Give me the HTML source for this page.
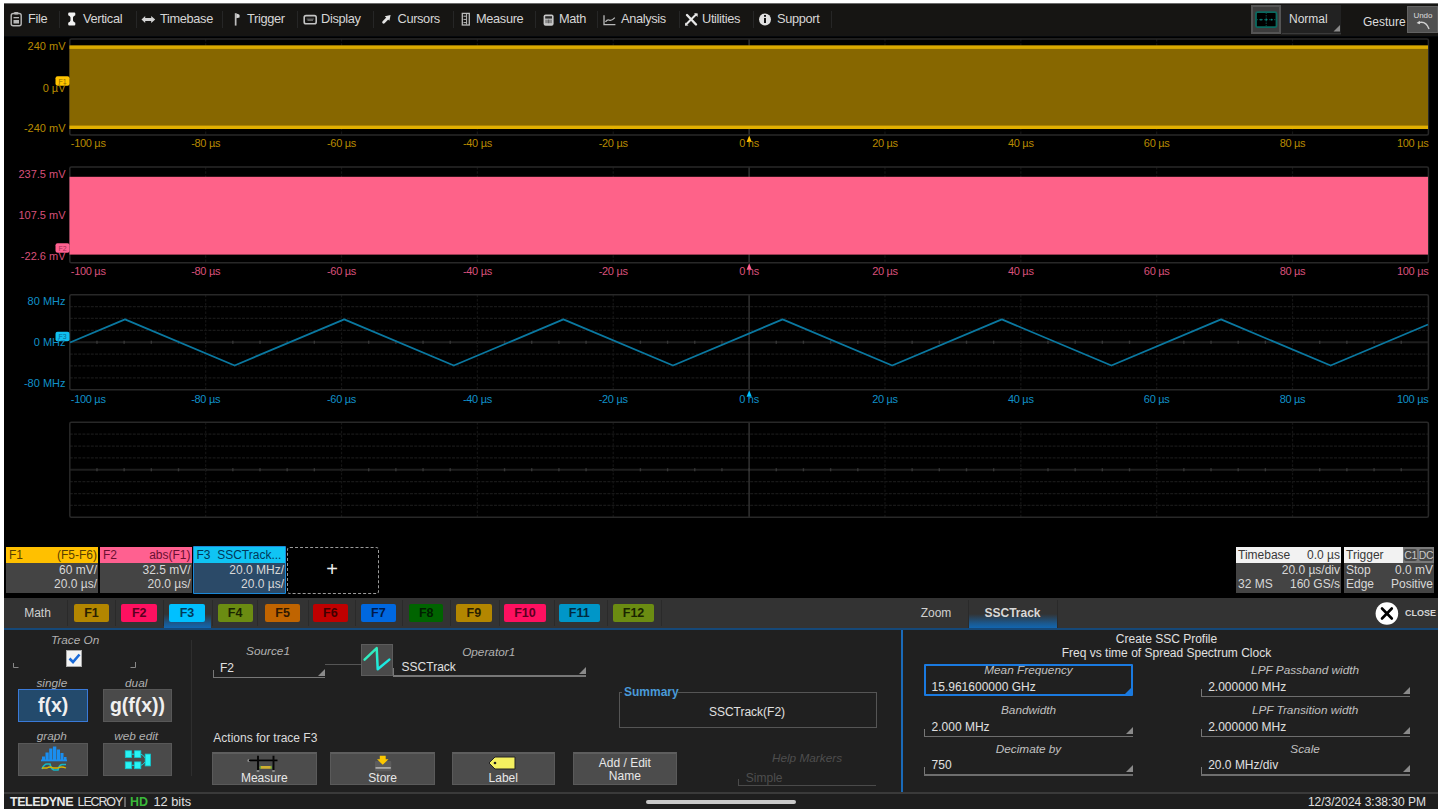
<!DOCTYPE html>
<html><head><meta charset="utf-8">
<style>
html,body{margin:0;padding:0;}
body{width:1441px;height:812px;background:#fff;position:relative;overflow:hidden;font-family:"Liberation Sans", sans-serif;}
.a{position:absolute;white-space:pre;}
.t{position:absolute;white-space:pre;line-height:1;}
</style></head><body>
<div class="a" style="left:4px;top:3px;width:1434px;height:806px;background:#000;"></div>

<div class="a" style="left:4px;top:3px;width:1434px;height:33px;background:#161513;"></div>
<div class="a" style="left:4px;top:36px;width:1434px;height:1px;background:#05080c;"></div>
<div class="a" style="left:4px;top:3px;width:1434px;height:1px;background:#6a6a6a;"></div>
<div class="t" style="left:28px;top:12.7px;font-size:12.8px;letter-spacing:-0.35px;color:#d6d6d6;">File</div>
<div class="a" style="left:59px;top:11px;width:1px;height:17px;background:#262626;"></div>
<div class="t" style="left:83px;top:12.7px;font-size:12.8px;letter-spacing:-0.35px;color:#d6d6d6;">Vertical</div>
<div class="a" style="left:135.5px;top:11px;width:1px;height:17px;background:#262626;"></div>
<div class="t" style="left:160px;top:12.7px;font-size:12.8px;letter-spacing:-0.35px;color:#d6d6d6;">Timebase</div>
<div class="a" style="left:222px;top:11px;width:1px;height:17px;background:#262626;"></div>
<div class="t" style="left:247px;top:12.7px;font-size:12.8px;letter-spacing:-0.35px;color:#d6d6d6;">Trigger</div>
<div class="a" style="left:296.5px;top:11px;width:1px;height:17px;background:#262626;"></div>
<div class="t" style="left:321px;top:12.7px;font-size:12.8px;letter-spacing:-0.35px;color:#d6d6d6;">Display</div>
<div class="a" style="left:372.5px;top:11px;width:1px;height:17px;background:#262626;"></div>
<div class="t" style="left:397.5px;top:12.7px;font-size:12.8px;letter-spacing:-0.35px;color:#d6d6d6;">Cursors</div>
<div class="a" style="left:452.5px;top:11px;width:1px;height:17px;background:#262626;"></div>
<div class="t" style="left:476px;top:12.7px;font-size:12.8px;letter-spacing:-0.35px;color:#d6d6d6;">Measure</div>
<div class="a" style="left:535px;top:11px;width:1px;height:17px;background:#262626;"></div>
<div class="t" style="left:559px;top:12.7px;font-size:12.8px;letter-spacing:-0.35px;color:#d6d6d6;">Math</div>
<div class="a" style="left:597px;top:11px;width:1px;height:17px;background:#262626;"></div>
<div class="t" style="left:621px;top:12.7px;font-size:12.8px;letter-spacing:-0.35px;color:#d6d6d6;">Analysis</div>
<div class="a" style="left:679px;top:11px;width:1px;height:17px;background:#262626;"></div>
<div class="t" style="left:702px;top:12.7px;font-size:12.8px;letter-spacing:-0.35px;color:#d6d6d6;">Utilities</div>
<div class="a" style="left:753px;top:11px;width:1px;height:17px;background:#262626;"></div>
<div class="t" style="left:777px;top:12.7px;font-size:12.8px;letter-spacing:-0.35px;color:#d6d6d6;">Support</div>
<div class="a" style="left:831px;top:11px;width:1px;height:17px;background:#262626;"></div>
<svg class="a" style="left:0;top:0" width="840" height="36" viewBox="0 0 840 36">
<g fill="none" stroke="#b8b8b8" stroke-width="1.4">
 <rect x="11.2" y="13.5" width="10" height="12.3" rx="2"/>
</g>
<rect x="14" y="12" width="4.5" height="2.5" rx="1" fill="#b8b8b8"/>
<rect x="13.5" y="17" width="5.5" height="1.3" fill="#b8b8b8"/>
<rect x="13.5" y="20" width="5.5" height="3.5" fill="#b8b8b8"/>
<path d="M68.2 13.5 Q68.2 12.6 69.2 12.6 L74.3 12.6 Q75.3 12.6 75.3 13.5 L75.3 15.2 Q73.2 16 73 17.5 L73 20.5 Q73.2 22 75.3 22.8 L75.3 24.5 Q75.3 25.4 74.3 25.4 L69.2 25.4 Q68.2 25.4 68.2 24.5 L68.2 22.8 Q70.3 22 70.5 20.5 L70.5 17.5 Q70.3 16 68.2 15.2 Z" fill="#f2f2f2"/>
<path d="M141.5 19.4 L145.2 16 L145.2 17.9 L151.2 17.9 L151.2 16 L155.2 19.4 L151.2 22.9 L151.2 20.9 L145.2 20.9 L145.2 22.9 Z" fill="#d4d4d4"/>
<rect x="234.8" y="13.2" width="1.7" height="12.4" fill="#bdbdbd"/>
<path d="M236.3 13.4 L238.6 14.3 L239.6 15 L239.6 17.6 L236.3 18.2 Z" fill="#d6d6d6"/>
<rect x="304.2" y="15.6" width="12" height="8.2" rx="1.8" fill="none" stroke="#c4c4c4" stroke-width="1.6"/>
<rect x="306.5" y="17.8" width="7.5" height="2.2" fill="#3a3a3a"/>
<rect x="307.5" y="19.6" width="5.5" height="1" fill="#a0a0a0"/>
<path d="M383.6 22.2 L387.5 18.3" stroke="#e4e4e4" stroke-width="2.8" stroke-linecap="round"/><path d="M390.6 15 L384.8 16.2 L389.4 20.8 Z" fill="#e4e4e4"/>
<rect x="462.3" y="13.4" width="7" height="11.6" fill="none" stroke="#bcbcbc" stroke-width="1.3"/>
<path d="M466.6 14 V24.5" stroke="#bcbcbc" stroke-width="1"/>
<path d="M463.5 16.2 h3 M463.5 19.4 h3 M463.5 22.6 h3" stroke="#bcbcbc" stroke-width="1"/>
<rect x="543.6" y="14.6" width="10" height="11.2" rx="2" fill="#c8c8c8"/>
<rect x="545.2" y="16.2" width="6.8" height="2.4" fill="#2a2a2a"/>
<rect x="545.2" y="19.6" width="6.8" height="3.6" fill="#8a8a8a"/>
<path d="M548.6 19.6 V23.2" stroke="#555" stroke-width="0.8"/>
<path d="M604 15.2 L604 24.6 L615.4 24.6" fill="none" stroke="#b8b8b8" stroke-width="1.3"/>
<path d="M605.5 21.8 Q607.5 19 609.5 20.2 Q611.5 21.2 614.8 17.6" fill="none" stroke="#b8b8b8" stroke-width="1.3"/>
<path d="M687 15 L696 24.5" stroke="#e8e8e8" stroke-width="2.4" stroke-linecap="round"/><path d="M696 14.5 L687 23.5" stroke="#e8e8e8" stroke-width="2" stroke-linecap="round"/><path d="M694 13.2 L697.8 13.6 L697.5 17 Z M685.2 22.5 L688.5 25.5 L685 25.8 Z" fill="#e8e8e8"/>
<circle cx="765" cy="19.5" r="6" fill="#e0e0e0"/>
<rect x="764" y="18" width="2" height="5" fill="#141414"/>
<rect x="764" y="15" width="2" height="1.8" fill="#141414"/>
</svg>
<div class="a" style="left:1250.6px;top:4.7px;width:30.5px;height:29.5px;background:#3c3c3c;border:2px solid #545454;box-sizing:border-box;"></div>
<svg class="a" style="left:1250px;top:8px" width="32" height="24" viewBox="1250 8 32 24">
<rect x="1256" y="12.2" width="20.5" height="15" rx="1.5" fill="#000" stroke="#0a6a60" stroke-width="1.8"/>
<path d="M1266.2 12.5 V27 M1256.5 19.7 H1276.5" stroke="#0a5a52" stroke-width="0.9" stroke-dasharray="1.5 1"/>
<circle cx="1261" cy="19.7" r="0.9" fill="#0a8a80"/><circle cx="1271.5" cy="19.7" r="0.9" fill="#0a8a80"/><circle cx="1266.2" cy="19.7" r="0.9" fill="#0a8a80"/>
</svg>
<div class="a" style="left:1281px;top:4.7px;width:59.8px;height:30.2px;background:#222;"></div>
<div class="a" style="left:1282px;top:33.2px;width:58.8px;height:1.2px;background:#3a3a3a;"></div>
<div class="t" style="left:1289px;top:13px;font-size:12px;color:#dcdcdc;">Normal</div>
<svg class="a" style="left:1333px;top:25px" width="8" height="8"><path d="M7 0 L7 6.5 L0.5 6.5 Z" fill="#8a8a8a"/></svg>
<div class="t" style="left:1363px;top:15.5px;font-size:12px;color:#dcdcdc;">Gesture</div>
<div class="a" style="left:1407px;top:6.2px;width:30.5px;height:27px;background:#505050;border:1px solid #626262;box-sizing:border-box;"></div>
<div class="t" style="left:1413.4px;top:11.9px;font-size:8px;color:#dcdcdc;">Undo</div>
<svg class="a" style="left:1400px;top:10px" width="41" height="25" viewBox="1400 10 41 25"><path d="M1418.5 22.6 Q1426 20.5 1428.8 28.6" fill="none" stroke="#d0d0d0" stroke-width="1.4" stroke-linecap="round"/><path d="M1416.6 23 L1419.8 20.8 L1420 24.2 Z" fill="#d8d8d8"/></svg>
<svg class="a" style="left:0;top:0" width="1441" height="600" viewBox="0 0 1441 600">
<line x1="69.8" y1="51.00" x2="1428.4" y2="51.00" stroke="#181818" stroke-width="1.2" stroke-dasharray="3 1.2"/>
<line x1="69.8" y1="63.00" x2="1428.4" y2="63.00" stroke="#181818" stroke-width="1.2" stroke-dasharray="3 1.2"/>
<line x1="69.8" y1="75.00" x2="1428.4" y2="75.00" stroke="#181818" stroke-width="1.2" stroke-dasharray="3 1.2"/>
<line x1="69.8" y1="87.00" x2="1428.4" y2="87.00" stroke="#1e1e1e" stroke-width="2"/>
<line x1="96.97" y1="85.50" x2="96.97" y2="88.50" stroke="#383838" stroke-width="1.4"/>
<line x1="124.14" y1="85.50" x2="124.14" y2="88.50" stroke="#383838" stroke-width="1.4"/>
<line x1="151.32" y1="85.50" x2="151.32" y2="88.50" stroke="#383838" stroke-width="1.4"/>
<line x1="178.49" y1="85.50" x2="178.49" y2="88.50" stroke="#383838" stroke-width="1.4"/>
<line x1="205.66" y1="85.50" x2="205.66" y2="88.50" stroke="#383838" stroke-width="1.4"/>
<line x1="232.83" y1="85.50" x2="232.83" y2="88.50" stroke="#383838" stroke-width="1.4"/>
<line x1="260.00" y1="85.50" x2="260.00" y2="88.50" stroke="#383838" stroke-width="1.4"/>
<line x1="287.18" y1="85.50" x2="287.18" y2="88.50" stroke="#383838" stroke-width="1.4"/>
<line x1="314.35" y1="85.50" x2="314.35" y2="88.50" stroke="#383838" stroke-width="1.4"/>
<line x1="341.52" y1="85.50" x2="341.52" y2="88.50" stroke="#383838" stroke-width="1.4"/>
<line x1="368.69" y1="85.50" x2="368.69" y2="88.50" stroke="#383838" stroke-width="1.4"/>
<line x1="395.86" y1="85.50" x2="395.86" y2="88.50" stroke="#383838" stroke-width="1.4"/>
<line x1="423.04" y1="85.50" x2="423.04" y2="88.50" stroke="#383838" stroke-width="1.4"/>
<line x1="450.21" y1="85.50" x2="450.21" y2="88.50" stroke="#383838" stroke-width="1.4"/>
<line x1="477.38" y1="85.50" x2="477.38" y2="88.50" stroke="#383838" stroke-width="1.4"/>
<line x1="504.55" y1="85.50" x2="504.55" y2="88.50" stroke="#383838" stroke-width="1.4"/>
<line x1="531.72" y1="85.50" x2="531.72" y2="88.50" stroke="#383838" stroke-width="1.4"/>
<line x1="558.90" y1="85.50" x2="558.90" y2="88.50" stroke="#383838" stroke-width="1.4"/>
<line x1="586.07" y1="85.50" x2="586.07" y2="88.50" stroke="#383838" stroke-width="1.4"/>
<line x1="613.24" y1="85.50" x2="613.24" y2="88.50" stroke="#383838" stroke-width="1.4"/>
<line x1="640.41" y1="85.50" x2="640.41" y2="88.50" stroke="#383838" stroke-width="1.4"/>
<line x1="667.58" y1="85.50" x2="667.58" y2="88.50" stroke="#383838" stroke-width="1.4"/>
<line x1="694.76" y1="85.50" x2="694.76" y2="88.50" stroke="#383838" stroke-width="1.4"/>
<line x1="721.93" y1="85.50" x2="721.93" y2="88.50" stroke="#383838" stroke-width="1.4"/>
<line x1="749.10" y1="85.50" x2="749.10" y2="88.50" stroke="#383838" stroke-width="1.4"/>
<line x1="776.27" y1="85.50" x2="776.27" y2="88.50" stroke="#383838" stroke-width="1.4"/>
<line x1="803.44" y1="85.50" x2="803.44" y2="88.50" stroke="#383838" stroke-width="1.4"/>
<line x1="830.62" y1="85.50" x2="830.62" y2="88.50" stroke="#383838" stroke-width="1.4"/>
<line x1="857.79" y1="85.50" x2="857.79" y2="88.50" stroke="#383838" stroke-width="1.4"/>
<line x1="884.96" y1="85.50" x2="884.96" y2="88.50" stroke="#383838" stroke-width="1.4"/>
<line x1="912.13" y1="85.50" x2="912.13" y2="88.50" stroke="#383838" stroke-width="1.4"/>
<line x1="939.30" y1="85.50" x2="939.30" y2="88.50" stroke="#383838" stroke-width="1.4"/>
<line x1="966.48" y1="85.50" x2="966.48" y2="88.50" stroke="#383838" stroke-width="1.4"/>
<line x1="993.65" y1="85.50" x2="993.65" y2="88.50" stroke="#383838" stroke-width="1.4"/>
<line x1="1020.82" y1="85.50" x2="1020.82" y2="88.50" stroke="#383838" stroke-width="1.4"/>
<line x1="1047.99" y1="85.50" x2="1047.99" y2="88.50" stroke="#383838" stroke-width="1.4"/>
<line x1="1075.16" y1="85.50" x2="1075.16" y2="88.50" stroke="#383838" stroke-width="1.4"/>
<line x1="1102.34" y1="85.50" x2="1102.34" y2="88.50" stroke="#383838" stroke-width="1.4"/>
<line x1="1129.51" y1="85.50" x2="1129.51" y2="88.50" stroke="#383838" stroke-width="1.4"/>
<line x1="1156.68" y1="85.50" x2="1156.68" y2="88.50" stroke="#383838" stroke-width="1.4"/>
<line x1="1183.85" y1="85.50" x2="1183.85" y2="88.50" stroke="#383838" stroke-width="1.4"/>
<line x1="1211.02" y1="85.50" x2="1211.02" y2="88.50" stroke="#383838" stroke-width="1.4"/>
<line x1="1238.20" y1="85.50" x2="1238.20" y2="88.50" stroke="#383838" stroke-width="1.4"/>
<line x1="1265.37" y1="85.50" x2="1265.37" y2="88.50" stroke="#383838" stroke-width="1.4"/>
<line x1="1292.54" y1="85.50" x2="1292.54" y2="88.50" stroke="#383838" stroke-width="1.4"/>
<line x1="1319.71" y1="85.50" x2="1319.71" y2="88.50" stroke="#383838" stroke-width="1.4"/>
<line x1="1346.88" y1="85.50" x2="1346.88" y2="88.50" stroke="#383838" stroke-width="1.4"/>
<line x1="1374.06" y1="85.50" x2="1374.06" y2="88.50" stroke="#383838" stroke-width="1.4"/>
<line x1="1401.23" y1="85.50" x2="1401.23" y2="88.50" stroke="#383838" stroke-width="1.4"/>
<line x1="69.8" y1="99.00" x2="1428.4" y2="99.00" stroke="#181818" stroke-width="1.2" stroke-dasharray="3 1.2"/>
<line x1="69.8" y1="111.00" x2="1428.4" y2="111.00" stroke="#181818" stroke-width="1.2" stroke-dasharray="3 1.2"/>
<line x1="69.8" y1="123.00" x2="1428.4" y2="123.00" stroke="#181818" stroke-width="1.2" stroke-dasharray="3 1.2"/>
<line x1="205.66" y1="39.0" x2="205.66" y2="135.0" stroke="#141414" stroke-width="1.2" stroke-dasharray="2.5 1.7"/>
<line x1="341.52" y1="39.0" x2="341.52" y2="135.0" stroke="#141414" stroke-width="1.2" stroke-dasharray="2.5 1.7"/>
<line x1="477.38" y1="39.0" x2="477.38" y2="135.0" stroke="#141414" stroke-width="1.2" stroke-dasharray="2.5 1.7"/>
<line x1="613.24" y1="39.0" x2="613.24" y2="135.0" stroke="#141414" stroke-width="1.2" stroke-dasharray="2.5 1.7"/>
<line x1="749.10" y1="39.0" x2="749.10" y2="135.0" stroke="#3a3a3a" stroke-width="1.3"/>
<line x1="884.96" y1="39.0" x2="884.96" y2="135.0" stroke="#141414" stroke-width="1.2" stroke-dasharray="2.5 1.7"/>
<line x1="1020.82" y1="39.0" x2="1020.82" y2="135.0" stroke="#141414" stroke-width="1.2" stroke-dasharray="2.5 1.7"/>
<line x1="1156.68" y1="39.0" x2="1156.68" y2="135.0" stroke="#141414" stroke-width="1.2" stroke-dasharray="2.5 1.7"/>
<line x1="1292.54" y1="39.0" x2="1292.54" y2="135.0" stroke="#141414" stroke-width="1.2" stroke-dasharray="2.5 1.7"/>
<rect x="69.8" y="39.0" width="1358.6000000000001" height="96.0" rx="1.5" fill="none" stroke="#282828" stroke-width="1.5"/>
<line x1="69.8" y1="178.97" x2="1428.4" y2="178.97" stroke="#181818" stroke-width="1.2" stroke-dasharray="3 1.2"/>
<line x1="69.8" y1="190.95" x2="1428.4" y2="190.95" stroke="#181818" stroke-width="1.2" stroke-dasharray="3 1.2"/>
<line x1="69.8" y1="202.93" x2="1428.4" y2="202.93" stroke="#181818" stroke-width="1.2" stroke-dasharray="3 1.2"/>
<line x1="69.8" y1="214.90" x2="1428.4" y2="214.90" stroke="#1e1e1e" stroke-width="2"/>
<line x1="96.97" y1="213.40" x2="96.97" y2="216.40" stroke="#383838" stroke-width="1.4"/>
<line x1="124.14" y1="213.40" x2="124.14" y2="216.40" stroke="#383838" stroke-width="1.4"/>
<line x1="151.32" y1="213.40" x2="151.32" y2="216.40" stroke="#383838" stroke-width="1.4"/>
<line x1="178.49" y1="213.40" x2="178.49" y2="216.40" stroke="#383838" stroke-width="1.4"/>
<line x1="205.66" y1="213.40" x2="205.66" y2="216.40" stroke="#383838" stroke-width="1.4"/>
<line x1="232.83" y1="213.40" x2="232.83" y2="216.40" stroke="#383838" stroke-width="1.4"/>
<line x1="260.00" y1="213.40" x2="260.00" y2="216.40" stroke="#383838" stroke-width="1.4"/>
<line x1="287.18" y1="213.40" x2="287.18" y2="216.40" stroke="#383838" stroke-width="1.4"/>
<line x1="314.35" y1="213.40" x2="314.35" y2="216.40" stroke="#383838" stroke-width="1.4"/>
<line x1="341.52" y1="213.40" x2="341.52" y2="216.40" stroke="#383838" stroke-width="1.4"/>
<line x1="368.69" y1="213.40" x2="368.69" y2="216.40" stroke="#383838" stroke-width="1.4"/>
<line x1="395.86" y1="213.40" x2="395.86" y2="216.40" stroke="#383838" stroke-width="1.4"/>
<line x1="423.04" y1="213.40" x2="423.04" y2="216.40" stroke="#383838" stroke-width="1.4"/>
<line x1="450.21" y1="213.40" x2="450.21" y2="216.40" stroke="#383838" stroke-width="1.4"/>
<line x1="477.38" y1="213.40" x2="477.38" y2="216.40" stroke="#383838" stroke-width="1.4"/>
<line x1="504.55" y1="213.40" x2="504.55" y2="216.40" stroke="#383838" stroke-width="1.4"/>
<line x1="531.72" y1="213.40" x2="531.72" y2="216.40" stroke="#383838" stroke-width="1.4"/>
<line x1="558.90" y1="213.40" x2="558.90" y2="216.40" stroke="#383838" stroke-width="1.4"/>
<line x1="586.07" y1="213.40" x2="586.07" y2="216.40" stroke="#383838" stroke-width="1.4"/>
<line x1="613.24" y1="213.40" x2="613.24" y2="216.40" stroke="#383838" stroke-width="1.4"/>
<line x1="640.41" y1="213.40" x2="640.41" y2="216.40" stroke="#383838" stroke-width="1.4"/>
<line x1="667.58" y1="213.40" x2="667.58" y2="216.40" stroke="#383838" stroke-width="1.4"/>
<line x1="694.76" y1="213.40" x2="694.76" y2="216.40" stroke="#383838" stroke-width="1.4"/>
<line x1="721.93" y1="213.40" x2="721.93" y2="216.40" stroke="#383838" stroke-width="1.4"/>
<line x1="749.10" y1="213.40" x2="749.10" y2="216.40" stroke="#383838" stroke-width="1.4"/>
<line x1="776.27" y1="213.40" x2="776.27" y2="216.40" stroke="#383838" stroke-width="1.4"/>
<line x1="803.44" y1="213.40" x2="803.44" y2="216.40" stroke="#383838" stroke-width="1.4"/>
<line x1="830.62" y1="213.40" x2="830.62" y2="216.40" stroke="#383838" stroke-width="1.4"/>
<line x1="857.79" y1="213.40" x2="857.79" y2="216.40" stroke="#383838" stroke-width="1.4"/>
<line x1="884.96" y1="213.40" x2="884.96" y2="216.40" stroke="#383838" stroke-width="1.4"/>
<line x1="912.13" y1="213.40" x2="912.13" y2="216.40" stroke="#383838" stroke-width="1.4"/>
<line x1="939.30" y1="213.40" x2="939.30" y2="216.40" stroke="#383838" stroke-width="1.4"/>
<line x1="966.48" y1="213.40" x2="966.48" y2="216.40" stroke="#383838" stroke-width="1.4"/>
<line x1="993.65" y1="213.40" x2="993.65" y2="216.40" stroke="#383838" stroke-width="1.4"/>
<line x1="1020.82" y1="213.40" x2="1020.82" y2="216.40" stroke="#383838" stroke-width="1.4"/>
<line x1="1047.99" y1="213.40" x2="1047.99" y2="216.40" stroke="#383838" stroke-width="1.4"/>
<line x1="1075.16" y1="213.40" x2="1075.16" y2="216.40" stroke="#383838" stroke-width="1.4"/>
<line x1="1102.34" y1="213.40" x2="1102.34" y2="216.40" stroke="#383838" stroke-width="1.4"/>
<line x1="1129.51" y1="213.40" x2="1129.51" y2="216.40" stroke="#383838" stroke-width="1.4"/>
<line x1="1156.68" y1="213.40" x2="1156.68" y2="216.40" stroke="#383838" stroke-width="1.4"/>
<line x1="1183.85" y1="213.40" x2="1183.85" y2="216.40" stroke="#383838" stroke-width="1.4"/>
<line x1="1211.02" y1="213.40" x2="1211.02" y2="216.40" stroke="#383838" stroke-width="1.4"/>
<line x1="1238.20" y1="213.40" x2="1238.20" y2="216.40" stroke="#383838" stroke-width="1.4"/>
<line x1="1265.37" y1="213.40" x2="1265.37" y2="216.40" stroke="#383838" stroke-width="1.4"/>
<line x1="1292.54" y1="213.40" x2="1292.54" y2="216.40" stroke="#383838" stroke-width="1.4"/>
<line x1="1319.71" y1="213.40" x2="1319.71" y2="216.40" stroke="#383838" stroke-width="1.4"/>
<line x1="1346.88" y1="213.40" x2="1346.88" y2="216.40" stroke="#383838" stroke-width="1.4"/>
<line x1="1374.06" y1="213.40" x2="1374.06" y2="216.40" stroke="#383838" stroke-width="1.4"/>
<line x1="1401.23" y1="213.40" x2="1401.23" y2="216.40" stroke="#383838" stroke-width="1.4"/>
<line x1="69.8" y1="226.88" x2="1428.4" y2="226.88" stroke="#181818" stroke-width="1.2" stroke-dasharray="3 1.2"/>
<line x1="69.8" y1="238.85" x2="1428.4" y2="238.85" stroke="#181818" stroke-width="1.2" stroke-dasharray="3 1.2"/>
<line x1="69.8" y1="250.82" x2="1428.4" y2="250.82" stroke="#181818" stroke-width="1.2" stroke-dasharray="3 1.2"/>
<line x1="205.66" y1="167.0" x2="205.66" y2="262.8" stroke="#141414" stroke-width="1.2" stroke-dasharray="2.5 1.7"/>
<line x1="341.52" y1="167.0" x2="341.52" y2="262.8" stroke="#141414" stroke-width="1.2" stroke-dasharray="2.5 1.7"/>
<line x1="477.38" y1="167.0" x2="477.38" y2="262.8" stroke="#141414" stroke-width="1.2" stroke-dasharray="2.5 1.7"/>
<line x1="613.24" y1="167.0" x2="613.24" y2="262.8" stroke="#141414" stroke-width="1.2" stroke-dasharray="2.5 1.7"/>
<line x1="749.10" y1="167.0" x2="749.10" y2="262.8" stroke="#3a3a3a" stroke-width="1.3"/>
<line x1="884.96" y1="167.0" x2="884.96" y2="262.8" stroke="#141414" stroke-width="1.2" stroke-dasharray="2.5 1.7"/>
<line x1="1020.82" y1="167.0" x2="1020.82" y2="262.8" stroke="#141414" stroke-width="1.2" stroke-dasharray="2.5 1.7"/>
<line x1="1156.68" y1="167.0" x2="1156.68" y2="262.8" stroke="#141414" stroke-width="1.2" stroke-dasharray="2.5 1.7"/>
<line x1="1292.54" y1="167.0" x2="1292.54" y2="262.8" stroke="#141414" stroke-width="1.2" stroke-dasharray="2.5 1.7"/>
<rect x="69.8" y="167.0" width="1358.6000000000001" height="95.8" rx="1.5" fill="none" stroke="#282828" stroke-width="1.5"/>
<line x1="69.8" y1="306.57" x2="1428.4" y2="306.57" stroke="#181818" stroke-width="1.2" stroke-dasharray="3 1.2"/>
<line x1="69.8" y1="318.45" x2="1428.4" y2="318.45" stroke="#181818" stroke-width="1.2" stroke-dasharray="3 1.2"/>
<line x1="69.8" y1="330.32" x2="1428.4" y2="330.32" stroke="#181818" stroke-width="1.2" stroke-dasharray="3 1.2"/>
<line x1="69.8" y1="342.20" x2="1428.4" y2="342.20" stroke="#1e1e1e" stroke-width="2"/>
<line x1="96.97" y1="340.70" x2="96.97" y2="343.70" stroke="#383838" stroke-width="1.4"/>
<line x1="124.14" y1="340.70" x2="124.14" y2="343.70" stroke="#383838" stroke-width="1.4"/>
<line x1="151.32" y1="340.70" x2="151.32" y2="343.70" stroke="#383838" stroke-width="1.4"/>
<line x1="178.49" y1="340.70" x2="178.49" y2="343.70" stroke="#383838" stroke-width="1.4"/>
<line x1="205.66" y1="340.70" x2="205.66" y2="343.70" stroke="#383838" stroke-width="1.4"/>
<line x1="232.83" y1="340.70" x2="232.83" y2="343.70" stroke="#383838" stroke-width="1.4"/>
<line x1="260.00" y1="340.70" x2="260.00" y2="343.70" stroke="#383838" stroke-width="1.4"/>
<line x1="287.18" y1="340.70" x2="287.18" y2="343.70" stroke="#383838" stroke-width="1.4"/>
<line x1="314.35" y1="340.70" x2="314.35" y2="343.70" stroke="#383838" stroke-width="1.4"/>
<line x1="341.52" y1="340.70" x2="341.52" y2="343.70" stroke="#383838" stroke-width="1.4"/>
<line x1="368.69" y1="340.70" x2="368.69" y2="343.70" stroke="#383838" stroke-width="1.4"/>
<line x1="395.86" y1="340.70" x2="395.86" y2="343.70" stroke="#383838" stroke-width="1.4"/>
<line x1="423.04" y1="340.70" x2="423.04" y2="343.70" stroke="#383838" stroke-width="1.4"/>
<line x1="450.21" y1="340.70" x2="450.21" y2="343.70" stroke="#383838" stroke-width="1.4"/>
<line x1="477.38" y1="340.70" x2="477.38" y2="343.70" stroke="#383838" stroke-width="1.4"/>
<line x1="504.55" y1="340.70" x2="504.55" y2="343.70" stroke="#383838" stroke-width="1.4"/>
<line x1="531.72" y1="340.70" x2="531.72" y2="343.70" stroke="#383838" stroke-width="1.4"/>
<line x1="558.90" y1="340.70" x2="558.90" y2="343.70" stroke="#383838" stroke-width="1.4"/>
<line x1="586.07" y1="340.70" x2="586.07" y2="343.70" stroke="#383838" stroke-width="1.4"/>
<line x1="613.24" y1="340.70" x2="613.24" y2="343.70" stroke="#383838" stroke-width="1.4"/>
<line x1="640.41" y1="340.70" x2="640.41" y2="343.70" stroke="#383838" stroke-width="1.4"/>
<line x1="667.58" y1="340.70" x2="667.58" y2="343.70" stroke="#383838" stroke-width="1.4"/>
<line x1="694.76" y1="340.70" x2="694.76" y2="343.70" stroke="#383838" stroke-width="1.4"/>
<line x1="721.93" y1="340.70" x2="721.93" y2="343.70" stroke="#383838" stroke-width="1.4"/>
<line x1="749.10" y1="340.70" x2="749.10" y2="343.70" stroke="#383838" stroke-width="1.4"/>
<line x1="776.27" y1="340.70" x2="776.27" y2="343.70" stroke="#383838" stroke-width="1.4"/>
<line x1="803.44" y1="340.70" x2="803.44" y2="343.70" stroke="#383838" stroke-width="1.4"/>
<line x1="830.62" y1="340.70" x2="830.62" y2="343.70" stroke="#383838" stroke-width="1.4"/>
<line x1="857.79" y1="340.70" x2="857.79" y2="343.70" stroke="#383838" stroke-width="1.4"/>
<line x1="884.96" y1="340.70" x2="884.96" y2="343.70" stroke="#383838" stroke-width="1.4"/>
<line x1="912.13" y1="340.70" x2="912.13" y2="343.70" stroke="#383838" stroke-width="1.4"/>
<line x1="939.30" y1="340.70" x2="939.30" y2="343.70" stroke="#383838" stroke-width="1.4"/>
<line x1="966.48" y1="340.70" x2="966.48" y2="343.70" stroke="#383838" stroke-width="1.4"/>
<line x1="993.65" y1="340.70" x2="993.65" y2="343.70" stroke="#383838" stroke-width="1.4"/>
<line x1="1020.82" y1="340.70" x2="1020.82" y2="343.70" stroke="#383838" stroke-width="1.4"/>
<line x1="1047.99" y1="340.70" x2="1047.99" y2="343.70" stroke="#383838" stroke-width="1.4"/>
<line x1="1075.16" y1="340.70" x2="1075.16" y2="343.70" stroke="#383838" stroke-width="1.4"/>
<line x1="1102.34" y1="340.70" x2="1102.34" y2="343.70" stroke="#383838" stroke-width="1.4"/>
<line x1="1129.51" y1="340.70" x2="1129.51" y2="343.70" stroke="#383838" stroke-width="1.4"/>
<line x1="1156.68" y1="340.70" x2="1156.68" y2="343.70" stroke="#383838" stroke-width="1.4"/>
<line x1="1183.85" y1="340.70" x2="1183.85" y2="343.70" stroke="#383838" stroke-width="1.4"/>
<line x1="1211.02" y1="340.70" x2="1211.02" y2="343.70" stroke="#383838" stroke-width="1.4"/>
<line x1="1238.20" y1="340.70" x2="1238.20" y2="343.70" stroke="#383838" stroke-width="1.4"/>
<line x1="1265.37" y1="340.70" x2="1265.37" y2="343.70" stroke="#383838" stroke-width="1.4"/>
<line x1="1292.54" y1="340.70" x2="1292.54" y2="343.70" stroke="#383838" stroke-width="1.4"/>
<line x1="1319.71" y1="340.70" x2="1319.71" y2="343.70" stroke="#383838" stroke-width="1.4"/>
<line x1="1346.88" y1="340.70" x2="1346.88" y2="343.70" stroke="#383838" stroke-width="1.4"/>
<line x1="1374.06" y1="340.70" x2="1374.06" y2="343.70" stroke="#383838" stroke-width="1.4"/>
<line x1="1401.23" y1="340.70" x2="1401.23" y2="343.70" stroke="#383838" stroke-width="1.4"/>
<line x1="69.8" y1="354.07" x2="1428.4" y2="354.07" stroke="#181818" stroke-width="1.2" stroke-dasharray="3 1.2"/>
<line x1="69.8" y1="365.95" x2="1428.4" y2="365.95" stroke="#181818" stroke-width="1.2" stroke-dasharray="3 1.2"/>
<line x1="69.8" y1="377.82" x2="1428.4" y2="377.82" stroke="#181818" stroke-width="1.2" stroke-dasharray="3 1.2"/>
<line x1="205.66" y1="294.7" x2="205.66" y2="389.7" stroke="#141414" stroke-width="1.2" stroke-dasharray="2.5 1.7"/>
<line x1="341.52" y1="294.7" x2="341.52" y2="389.7" stroke="#141414" stroke-width="1.2" stroke-dasharray="2.5 1.7"/>
<line x1="477.38" y1="294.7" x2="477.38" y2="389.7" stroke="#141414" stroke-width="1.2" stroke-dasharray="2.5 1.7"/>
<line x1="613.24" y1="294.7" x2="613.24" y2="389.7" stroke="#141414" stroke-width="1.2" stroke-dasharray="2.5 1.7"/>
<line x1="749.10" y1="294.7" x2="749.10" y2="389.7" stroke="#3a3a3a" stroke-width="1.3"/>
<line x1="884.96" y1="294.7" x2="884.96" y2="389.7" stroke="#141414" stroke-width="1.2" stroke-dasharray="2.5 1.7"/>
<line x1="1020.82" y1="294.7" x2="1020.82" y2="389.7" stroke="#141414" stroke-width="1.2" stroke-dasharray="2.5 1.7"/>
<line x1="1156.68" y1="294.7" x2="1156.68" y2="389.7" stroke="#141414" stroke-width="1.2" stroke-dasharray="2.5 1.7"/>
<line x1="1292.54" y1="294.7" x2="1292.54" y2="389.7" stroke="#141414" stroke-width="1.2" stroke-dasharray="2.5 1.7"/>
<rect x="69.8" y="294.7" width="1358.6000000000001" height="95.0" rx="1.5" fill="none" stroke="#282828" stroke-width="1.5"/>
<line x1="69.8" y1="434.18" x2="1428.4" y2="434.18" stroke="#181818" stroke-width="1.2" stroke-dasharray="3 1.2"/>
<line x1="69.8" y1="446.05" x2="1428.4" y2="446.05" stroke="#181818" stroke-width="1.2" stroke-dasharray="3 1.2"/>
<line x1="69.8" y1="457.93" x2="1428.4" y2="457.93" stroke="#181818" stroke-width="1.2" stroke-dasharray="3 1.2"/>
<line x1="69.8" y1="469.80" x2="1428.4" y2="469.80" stroke="#1e1e1e" stroke-width="2"/>
<line x1="96.97" y1="468.30" x2="96.97" y2="471.30" stroke="#383838" stroke-width="1.4"/>
<line x1="124.14" y1="468.30" x2="124.14" y2="471.30" stroke="#383838" stroke-width="1.4"/>
<line x1="151.32" y1="468.30" x2="151.32" y2="471.30" stroke="#383838" stroke-width="1.4"/>
<line x1="178.49" y1="468.30" x2="178.49" y2="471.30" stroke="#383838" stroke-width="1.4"/>
<line x1="205.66" y1="468.30" x2="205.66" y2="471.30" stroke="#383838" stroke-width="1.4"/>
<line x1="232.83" y1="468.30" x2="232.83" y2="471.30" stroke="#383838" stroke-width="1.4"/>
<line x1="260.00" y1="468.30" x2="260.00" y2="471.30" stroke="#383838" stroke-width="1.4"/>
<line x1="287.18" y1="468.30" x2="287.18" y2="471.30" stroke="#383838" stroke-width="1.4"/>
<line x1="314.35" y1="468.30" x2="314.35" y2="471.30" stroke="#383838" stroke-width="1.4"/>
<line x1="341.52" y1="468.30" x2="341.52" y2="471.30" stroke="#383838" stroke-width="1.4"/>
<line x1="368.69" y1="468.30" x2="368.69" y2="471.30" stroke="#383838" stroke-width="1.4"/>
<line x1="395.86" y1="468.30" x2="395.86" y2="471.30" stroke="#383838" stroke-width="1.4"/>
<line x1="423.04" y1="468.30" x2="423.04" y2="471.30" stroke="#383838" stroke-width="1.4"/>
<line x1="450.21" y1="468.30" x2="450.21" y2="471.30" stroke="#383838" stroke-width="1.4"/>
<line x1="477.38" y1="468.30" x2="477.38" y2="471.30" stroke="#383838" stroke-width="1.4"/>
<line x1="504.55" y1="468.30" x2="504.55" y2="471.30" stroke="#383838" stroke-width="1.4"/>
<line x1="531.72" y1="468.30" x2="531.72" y2="471.30" stroke="#383838" stroke-width="1.4"/>
<line x1="558.90" y1="468.30" x2="558.90" y2="471.30" stroke="#383838" stroke-width="1.4"/>
<line x1="586.07" y1="468.30" x2="586.07" y2="471.30" stroke="#383838" stroke-width="1.4"/>
<line x1="613.24" y1="468.30" x2="613.24" y2="471.30" stroke="#383838" stroke-width="1.4"/>
<line x1="640.41" y1="468.30" x2="640.41" y2="471.30" stroke="#383838" stroke-width="1.4"/>
<line x1="667.58" y1="468.30" x2="667.58" y2="471.30" stroke="#383838" stroke-width="1.4"/>
<line x1="694.76" y1="468.30" x2="694.76" y2="471.30" stroke="#383838" stroke-width="1.4"/>
<line x1="721.93" y1="468.30" x2="721.93" y2="471.30" stroke="#383838" stroke-width="1.4"/>
<line x1="749.10" y1="468.30" x2="749.10" y2="471.30" stroke="#383838" stroke-width="1.4"/>
<line x1="776.27" y1="468.30" x2="776.27" y2="471.30" stroke="#383838" stroke-width="1.4"/>
<line x1="803.44" y1="468.30" x2="803.44" y2="471.30" stroke="#383838" stroke-width="1.4"/>
<line x1="830.62" y1="468.30" x2="830.62" y2="471.30" stroke="#383838" stroke-width="1.4"/>
<line x1="857.79" y1="468.30" x2="857.79" y2="471.30" stroke="#383838" stroke-width="1.4"/>
<line x1="884.96" y1="468.30" x2="884.96" y2="471.30" stroke="#383838" stroke-width="1.4"/>
<line x1="912.13" y1="468.30" x2="912.13" y2="471.30" stroke="#383838" stroke-width="1.4"/>
<line x1="939.30" y1="468.30" x2="939.30" y2="471.30" stroke="#383838" stroke-width="1.4"/>
<line x1="966.48" y1="468.30" x2="966.48" y2="471.30" stroke="#383838" stroke-width="1.4"/>
<line x1="993.65" y1="468.30" x2="993.65" y2="471.30" stroke="#383838" stroke-width="1.4"/>
<line x1="1020.82" y1="468.30" x2="1020.82" y2="471.30" stroke="#383838" stroke-width="1.4"/>
<line x1="1047.99" y1="468.30" x2="1047.99" y2="471.30" stroke="#383838" stroke-width="1.4"/>
<line x1="1075.16" y1="468.30" x2="1075.16" y2="471.30" stroke="#383838" stroke-width="1.4"/>
<line x1="1102.34" y1="468.30" x2="1102.34" y2="471.30" stroke="#383838" stroke-width="1.4"/>
<line x1="1129.51" y1="468.30" x2="1129.51" y2="471.30" stroke="#383838" stroke-width="1.4"/>
<line x1="1156.68" y1="468.30" x2="1156.68" y2="471.30" stroke="#383838" stroke-width="1.4"/>
<line x1="1183.85" y1="468.30" x2="1183.85" y2="471.30" stroke="#383838" stroke-width="1.4"/>
<line x1="1211.02" y1="468.30" x2="1211.02" y2="471.30" stroke="#383838" stroke-width="1.4"/>
<line x1="1238.20" y1="468.30" x2="1238.20" y2="471.30" stroke="#383838" stroke-width="1.4"/>
<line x1="1265.37" y1="468.30" x2="1265.37" y2="471.30" stroke="#383838" stroke-width="1.4"/>
<line x1="1292.54" y1="468.30" x2="1292.54" y2="471.30" stroke="#383838" stroke-width="1.4"/>
<line x1="1319.71" y1="468.30" x2="1319.71" y2="471.30" stroke="#383838" stroke-width="1.4"/>
<line x1="1346.88" y1="468.30" x2="1346.88" y2="471.30" stroke="#383838" stroke-width="1.4"/>
<line x1="1374.06" y1="468.30" x2="1374.06" y2="471.30" stroke="#383838" stroke-width="1.4"/>
<line x1="1401.23" y1="468.30" x2="1401.23" y2="471.30" stroke="#383838" stroke-width="1.4"/>
<line x1="69.8" y1="481.68" x2="1428.4" y2="481.68" stroke="#181818" stroke-width="1.2" stroke-dasharray="3 1.2"/>
<line x1="69.8" y1="493.55" x2="1428.4" y2="493.55" stroke="#181818" stroke-width="1.2" stroke-dasharray="3 1.2"/>
<line x1="69.8" y1="505.43" x2="1428.4" y2="505.43" stroke="#181818" stroke-width="1.2" stroke-dasharray="3 1.2"/>
<line x1="205.66" y1="422.3" x2="205.66" y2="517.3" stroke="#141414" stroke-width="1.2" stroke-dasharray="2.5 1.7"/>
<line x1="341.52" y1="422.3" x2="341.52" y2="517.3" stroke="#141414" stroke-width="1.2" stroke-dasharray="2.5 1.7"/>
<line x1="477.38" y1="422.3" x2="477.38" y2="517.3" stroke="#141414" stroke-width="1.2" stroke-dasharray="2.5 1.7"/>
<line x1="613.24" y1="422.3" x2="613.24" y2="517.3" stroke="#141414" stroke-width="1.2" stroke-dasharray="2.5 1.7"/>
<line x1="749.10" y1="422.3" x2="749.10" y2="517.3" stroke="#3a3a3a" stroke-width="1.3"/>
<line x1="884.96" y1="422.3" x2="884.96" y2="517.3" stroke="#141414" stroke-width="1.2" stroke-dasharray="2.5 1.7"/>
<line x1="1020.82" y1="422.3" x2="1020.82" y2="517.3" stroke="#141414" stroke-width="1.2" stroke-dasharray="2.5 1.7"/>
<line x1="1156.68" y1="422.3" x2="1156.68" y2="517.3" stroke="#141414" stroke-width="1.2" stroke-dasharray="2.5 1.7"/>
<line x1="1292.54" y1="422.3" x2="1292.54" y2="517.3" stroke="#141414" stroke-width="1.2" stroke-dasharray="2.5 1.7"/>
<rect x="69.8" y="422.3" width="1358.6000000000001" height="95.0" rx="1.5" fill="none" stroke="#282828" stroke-width="1.5"/>
<rect x="69.5" y="45.5" width="1358.5" height="83.5" fill="#876700"/>
<rect x="69.5" y="45.5" width="1358.5" height="3.4" fill="#d8a800"/>
<rect x="69.5" y="125.6" width="1358.5" height="3.4" fill="#e2b000"/>
<rect x="69.5" y="176.8" width="1358.5" height="77.8" fill="#fe6289"/>
<polyline points="70.0,342.5 125.0,319.4 234.6,365.5 344.2,319.4 453.8,365.5 563.4,319.4 673.0,365.5 782.6,319.4 892.2,365.5 1001.8,319.4 1111.4,365.5 1221.0,319.4 1330.6,365.5 1428.0,324.5" fill="none" stroke="#0a78a0" stroke-width="1.8" stroke-linejoin="round"/>
<rect x="55.5" y="76.2" width="14" height="9.5" rx="2" fill="#ffc400"/><text x="62.5" y="83.5" font-size="7" text-anchor="middle" fill="#8a6a00" font-family="Liberation Sans">F1</text>
<rect x="55.5" y="243.2" width="14" height="9.5" rx="2" fill="#ff6090"/><text x="62.5" y="250.5" font-size="7" text-anchor="middle" fill="#a03050" font-family="Liberation Sans">F2</text>
<rect x="55.5" y="331.8" width="14" height="9.5" rx="2" fill="#10c0f0"/><text x="62.5" y="339.1" font-size="7" text-anchor="middle" fill="#0a6a90" font-family="Liberation Sans">F3</text>
<path d="M749.2 135.5 L751.8 142.0 L746.6 142.0 Z" fill="#ffc000"/>
<path d="M749.2 263.2 L751.8 269.7 L746.6 269.7 Z" fill="#ff6090"/>
<path d="M749.2 390.2 L751.8 396.7 L746.6 396.7 Z" fill="#00c0ff"/>
</svg>
<div class="t" style="right:1375.5px;top:41.3px;font-size:11px;color:#b88a00;">240 mV</div>
<div class="t" style="right:1375.5px;top:82.9px;font-size:11px;color:#b88a00;">0 µV</div>
<div class="t" style="right:1375.5px;top:123.0px;font-size:11px;color:#b88a00;">-240 mV</div>
<div class="t" style="left:70.8px;top:138.2px;font-size:11px;letter-spacing:-0.3px;color:#b88a00;">-100 µs</div>
<div class="t" style="left:165.7px;width:80px;text-align:center;top:138.2px;font-size:11px;letter-spacing:-0.3px;color:#b88a00;">-80 µs</div>
<div class="t" style="left:301.5px;width:80px;text-align:center;top:138.2px;font-size:11px;letter-spacing:-0.3px;color:#b88a00;">-60 µs</div>
<div class="t" style="left:437.4px;width:80px;text-align:center;top:138.2px;font-size:11px;letter-spacing:-0.3px;color:#b88a00;">-40 µs</div>
<div class="t" style="left:573.2px;width:80px;text-align:center;top:138.2px;font-size:11px;letter-spacing:-0.3px;color:#b88a00;">-20 µs</div>
<div class="t" style="left:709.1px;width:80px;text-align:center;top:138.2px;font-size:11px;letter-spacing:-0.3px;color:#b88a00;">0 ns</div>
<div class="t" style="left:845.0px;width:80px;text-align:center;top:138.2px;font-size:11px;letter-spacing:-0.3px;color:#b88a00;">20 µs</div>
<div class="t" style="left:980.8px;width:80px;text-align:center;top:138.2px;font-size:11px;letter-spacing:-0.3px;color:#b88a00;">40 µs</div>
<div class="t" style="left:1116.7px;width:80px;text-align:center;top:138.2px;font-size:11px;letter-spacing:-0.3px;color:#b88a00;">60 µs</div>
<div class="t" style="left:1252.5px;width:80px;text-align:center;top:138.2px;font-size:11px;letter-spacing:-0.3px;color:#b88a00;">80 µs</div>
<div class="t" style="right:12.6px;top:138.2px;font-size:11px;letter-spacing:-0.3px;color:#b88a00;">100 µs</div>
<div class="t" style="right:1375.5px;top:168.6px;font-size:11px;color:#d8507a;">237.5 mV</div>
<div class="t" style="right:1375.5px;top:210.0px;font-size:11px;color:#d8507a;">107.5 mV</div>
<div class="t" style="right:1375.5px;top:250.5px;font-size:11px;color:#d8507a;">-22.6 mV</div>
<div class="t" style="left:70.8px;top:266.1px;font-size:11px;letter-spacing:-0.3px;color:#d8507a;">-100 µs</div>
<div class="t" style="left:165.7px;width:80px;text-align:center;top:266.1px;font-size:11px;letter-spacing:-0.3px;color:#d8507a;">-80 µs</div>
<div class="t" style="left:301.5px;width:80px;text-align:center;top:266.1px;font-size:11px;letter-spacing:-0.3px;color:#d8507a;">-60 µs</div>
<div class="t" style="left:437.4px;width:80px;text-align:center;top:266.1px;font-size:11px;letter-spacing:-0.3px;color:#d8507a;">-40 µs</div>
<div class="t" style="left:573.2px;width:80px;text-align:center;top:266.1px;font-size:11px;letter-spacing:-0.3px;color:#d8507a;">-20 µs</div>
<div class="t" style="left:709.1px;width:80px;text-align:center;top:266.1px;font-size:11px;letter-spacing:-0.3px;color:#d8507a;">0 ns</div>
<div class="t" style="left:845.0px;width:80px;text-align:center;top:266.1px;font-size:11px;letter-spacing:-0.3px;color:#d8507a;">20 µs</div>
<div class="t" style="left:980.8px;width:80px;text-align:center;top:266.1px;font-size:11px;letter-spacing:-0.3px;color:#d8507a;">40 µs</div>
<div class="t" style="left:1116.7px;width:80px;text-align:center;top:266.1px;font-size:11px;letter-spacing:-0.3px;color:#d8507a;">60 µs</div>
<div class="t" style="left:1252.5px;width:80px;text-align:center;top:266.1px;font-size:11px;letter-spacing:-0.3px;color:#d8507a;">80 µs</div>
<div class="t" style="right:12.6px;top:266.1px;font-size:11px;letter-spacing:-0.3px;color:#d8507a;">100 µs</div>
<div class="t" style="right:1375.5px;top:296.4px;font-size:11px;color:#1090c8;">80 MHz</div>
<div class="t" style="right:1375.5px;top:337.0px;font-size:11px;color:#1090c8;">0 MHz</div>
<div class="t" style="right:1375.5px;top:378.0px;font-size:11px;color:#1090c8;">-80 MHz</div>
<div class="t" style="left:70.8px;top:393.5px;font-size:11px;letter-spacing:-0.3px;color:#1090c8;">-100 µs</div>
<div class="t" style="left:165.7px;width:80px;text-align:center;top:393.5px;font-size:11px;letter-spacing:-0.3px;color:#1090c8;">-80 µs</div>
<div class="t" style="left:301.5px;width:80px;text-align:center;top:393.5px;font-size:11px;letter-spacing:-0.3px;color:#1090c8;">-60 µs</div>
<div class="t" style="left:437.4px;width:80px;text-align:center;top:393.5px;font-size:11px;letter-spacing:-0.3px;color:#1090c8;">-40 µs</div>
<div class="t" style="left:573.2px;width:80px;text-align:center;top:393.5px;font-size:11px;letter-spacing:-0.3px;color:#1090c8;">-20 µs</div>
<div class="t" style="left:709.1px;width:80px;text-align:center;top:393.5px;font-size:11px;letter-spacing:-0.3px;color:#1090c8;">0 ns</div>
<div class="t" style="left:845.0px;width:80px;text-align:center;top:393.5px;font-size:11px;letter-spacing:-0.3px;color:#1090c8;">20 µs</div>
<div class="t" style="left:980.8px;width:80px;text-align:center;top:393.5px;font-size:11px;letter-spacing:-0.3px;color:#1090c8;">40 µs</div>
<div class="t" style="left:1116.7px;width:80px;text-align:center;top:393.5px;font-size:11px;letter-spacing:-0.3px;color:#1090c8;">60 µs</div>
<div class="t" style="left:1252.5px;width:80px;text-align:center;top:393.5px;font-size:11px;letter-spacing:-0.3px;color:#1090c8;">80 µs</div>
<div class="t" style="right:12.6px;top:393.5px;font-size:11px;letter-spacing:-0.3px;color:#1090c8;">100 µs</div>
<div class="a" style="left:6px;top:547px;width:92px;height:15.5px;background:#ffc000;"></div>
<div class="a" style="left:6px;top:562.5px;width:92px;height:30px;background:#444;"></div>
<div class="t" style="left:9px;top:548.5px;font-size:12px;color:#5a4000;">F1</div>
<div class="t" style="right:1344px;top:548.5px;font-size:12px;color:#5a4000;">(F5-F6)</div>
<div class="t" style="right:1344px;top:563.5px;font-size:12px;color:#d8d8d8;">60 mV/</div>
<div class="t" style="right:1344px;top:577.5px;font-size:12px;color:#d8d8d8;">20.0 µs/</div>
<div class="a" style="left:100px;top:547px;width:91.5px;height:15.5px;background:#ff6090;"></div>
<div class="a" style="left:100px;top:562.5px;width:91.5px;height:30px;background:#444;"></div>
<div class="t" style="left:103px;top:548.5px;font-size:12px;color:#6a1030;">F2</div>
<div class="t" style="right:1250.5px;top:548.5px;font-size:12px;color:#6a1030;">abs(F1)</div>
<div class="t" style="right:1250.5px;top:563.5px;font-size:12px;color:#d8d8d8;">32.5 mV/</div>
<div class="t" style="right:1250.5px;top:577.5px;font-size:12px;color:#d8d8d8;">20.0 µs/</div>
<div class="a" style="left:192.5px;top:546px;width:93.5px;height:47.5px;background:#1a88d8;border-radius:1px;"></div>
<div class="a" style="left:193.5px;top:547px;width:91.5px;height:15.5px;background:#10c4f4;"></div>
<div class="a" style="left:193.5px;top:562.5px;width:91.5px;height:30px;background:#2b4a68;"></div>
<div class="t" style="left:196.5px;top:548.5px;font-size:12px;color:#00385a;">F3  SSCTrack...</div>
<div class="t" style="right:1157px;top:548.5px;font-size:12px;color:#00385a;"></div>
<div class="t" style="right:1157px;top:563.5px;font-size:12px;color:#d8d8d8;">20.0 MHz/</div>
<div class="t" style="right:1157px;top:577.5px;font-size:12px;color:#d8d8d8;">20.0 µs/</div>
<div class="a" style="left:287px;top:547px;width:90px;height:44.5px;border:1.3px dashed #9a9a9a;border-radius:3px;"></div>
<div class="t" style="left:312px;top:559px;width:40px;text-align:center;font-size:20px;color:#eee;">+</div>
<div class="a" style="left:1235.5px;top:547.3px;width:105.5px;height:15.3px;background:#f2f2f2;"></div>
<div class="a" style="left:1235.5px;top:562.6px;width:105.5px;height:30px;background:#444;"></div>
<div class="t" style="left:1238px;top:549px;font-size:12px;color:#383838;">Timebase</div>
<div class="t" style="right:101px;top:549px;font-size:12px;color:#383838;">0.0 µs</div>
<div class="t" style="right:101px;top:564px;font-size:12px;color:#d8d8d8;">20.0 µs/div</div>
<div class="t" style="left:1238px;top:578px;font-size:12px;color:#d8d8d8;">32 MS</div>
<div class="t" style="right:101px;top:578px;font-size:12px;color:#d8d8d8;">160 GS/s</div>
<div class="a" style="left:1343.5px;top:547.3px;width:90.5px;height:15.3px;background:#f2f2f2;"></div>
<div class="a" style="left:1343.5px;top:562.6px;width:90.5px;height:30px;background:#444;"></div>
<div class="t" style="left:1346px;top:549px;font-size:12px;color:#383838;">Trigger</div>
<div class="a" style="left:1402.7px;top:547.3px;width:31.4px;height:15.3px;background:#7a7a7a;"></div>
<div class="a" style="left:1403.8px;top:548.8px;width:13.6px;height:12.4px;background:#464646;border-radius:2px;"></div>
<div class="a" style="left:1418.8px;top:548.8px;width:14.2px;height:12.4px;background:#464646;border-radius:2px;"></div>
<div class="t" style="left:1403.8px;top:550.2px;width:13.6px;text-align:center;font-size:10.5px;letter-spacing:-0.3px;color:#c8c8c8;">C1</div>
<div class="t" style="left:1418.8px;top:550.2px;width:14.2px;text-align:center;font-size:10.5px;letter-spacing:-0.5px;color:#c8c8c8;">DC</div>
<div class="t" style="left:1346px;top:564px;font-size:12px;color:#d8d8d8;">Stop</div>
<div class="t" style="right:8px;top:564px;font-size:12px;color:#d8d8d8;">0.0 mV</div>
<div class="t" style="left:1346px;top:578px;font-size:12px;color:#d8d8d8;">Edge</div>
<div class="t" style="right:8px;top:578px;font-size:12px;color:#d8d8d8;">Positive</div>
<div class="a" style="left:4px;top:597.8px;width:1434px;height:30.5px;background:#333;"></div>
<div class="a" style="left:4px;top:627.8px;width:1434px;height:2px;background:#154878;"></div>
<div class="t" style="left:17px;top:606.5px;width:41px;text-align:center;font-size:12px;color:#d0d0d0;">Math</div>
<div class="a" style="left:66.7px;top:600px;width:1px;height:26px;background:#2a2a2a;"></div>
<div class="a" style="left:115.3px;top:600px;width:1px;height:26px;background:#2a2a2a;"></div>
<div class="a" style="left:162.6px;top:600px;width:1px;height:26px;background:#2a2a2a;"></div>
<div class="a" style="left:211.5px;top:600px;width:1px;height:26px;background:#2a2a2a;"></div>
<div class="a" style="left:257.3px;top:600px;width:1px;height:26px;background:#2a2a2a;"></div>
<div class="a" style="left:307.6px;top:600px;width:1px;height:26px;background:#2a2a2a;"></div>
<div class="a" style="left:355px;top:600px;width:1px;height:26px;background:#2a2a2a;"></div>
<div class="a" style="left:402px;top:600px;width:1px;height:26px;background:#2a2a2a;"></div>
<div class="a" style="left:449.8px;top:600px;width:1px;height:26px;background:#2a2a2a;"></div>
<div class="a" style="left:498.5px;top:600px;width:1px;height:26px;background:#2a2a2a;"></div>
<div class="a" style="left:553.6px;top:600px;width:1px;height:26px;background:#2a2a2a;"></div>
<div class="a" style="left:606.8px;top:600px;width:1px;height:26px;background:#2a2a2a;"></div>
<div class="a" style="left:661px;top:600px;width:1px;height:26px;background:#2a2a2a;"></div>
<div class="a" style="left:164px;top:614px;width:47px;height:14px;background:linear-gradient(#333 0%, #1a5a92 70%, #1266b0 100%);"></div>
<div class="a" style="left:73.7px;top:604.2px;width:35.5px;height:18.3px;background:#b38600;border-radius:2px;"></div>
<div class="t" style="left:73.7px;top:607px;width:35.5px;text-align:center;font-size:12.5px;font-weight:bold;color:#2a2000;">F1</div>
<div class="a" style="left:121.4px;top:604.2px;width:35.6px;height:18.3px;background:#ff1060;border-radius:2px;"></div>
<div class="t" style="left:121.4px;top:607px;width:35.6px;text-align:center;font-size:12.5px;font-weight:bold;color:#5a0020;">F2</div>
<div class="a" style="left:169.2px;top:604.2px;width:35.7px;height:18.3px;background:#00c0ff;border-radius:2px;"></div>
<div class="t" style="left:169.2px;top:607px;width:35.7px;text-align:center;font-size:12.5px;font-weight:bold;color:#003a5a;">F3</div>
<div class="a" style="left:217.6px;top:604.2px;width:35.1px;height:18.3px;background:#6b8c12;border-radius:2px;"></div>
<div class="t" style="left:217.6px;top:607px;width:35.1px;text-align:center;font-size:12.5px;font-weight:bold;color:#1a2400;">F4</div>
<div class="a" style="left:265.3px;top:604.2px;width:34.7px;height:18.3px;background:#c06400;border-radius:2px;"></div>
<div class="t" style="left:265.3px;top:607px;width:34.7px;text-align:center;font-size:12.5px;font-weight:bold;color:#301800;">F5</div>
<div class="a" style="left:313px;top:604.2px;width:34.8px;height:18.3px;background:#c00000;border-radius:2px;"></div>
<div class="t" style="left:313px;top:607px;width:34.8px;text-align:center;font-size:12.5px;font-weight:bold;color:#400000;">F6</div>
<div class="a" style="left:360.8px;top:604.2px;width:35.1px;height:18.3px;background:#0068e0;border-radius:2px;"></div>
<div class="t" style="left:360.8px;top:607px;width:35.1px;text-align:center;font-size:12.5px;font-weight:bold;color:#001a4a;">F7</div>
<div class="a" style="left:408.9px;top:604.2px;width:34.6px;height:18.3px;background:#006400;border-radius:2px;"></div>
<div class="t" style="left:408.9px;top:607px;width:34.6px;text-align:center;font-size:12.5px;font-weight:bold;color:#002000;">F8</div>
<div class="a" style="left:456px;top:604.2px;width:35.6px;height:18.3px;background:#b38600;border-radius:2px;"></div>
<div class="t" style="left:456px;top:607px;width:35.6px;text-align:center;font-size:12.5px;font-weight:bold;color:#2a2000;">F9</div>
<div class="a" style="left:504px;top:604.2px;width:41.8px;height:18.3px;background:#ff1060;border-radius:2px;"></div>
<div class="t" style="left:504px;top:607px;width:41.8px;text-align:center;font-size:12.5px;font-weight:bold;color:#5a0020;">F10</div>
<div class="a" style="left:559px;top:604.2px;width:40.6px;height:18.3px;background:#0096c8;border-radius:2px;"></div>
<div class="t" style="left:559px;top:607px;width:40.6px;text-align:center;font-size:12.5px;font-weight:bold;color:#002a40;">F11</div>
<div class="a" style="left:612.8px;top:604.2px;width:41.5px;height:18.3px;background:#6b8c12;border-radius:2px;"></div>
<div class="t" style="left:612.8px;top:607px;width:41.5px;text-align:center;font-size:12.5px;font-weight:bold;color:#1a2400;">F12</div>
<div class="t" style="left:905px;top:606.5px;width:62px;text-align:center;font-size:12px;color:#d0d0d0;">Zoom</div>
<div class="a" style="left:967.8px;top:600px;width:1px;height:28px;background:#2a2a2a;"></div>
<div class="a" style="left:968.5px;top:614px;width:88px;height:14px;background:linear-gradient(#333 0%, #1a5a92 70%, #1266b0 100%);"></div>
<div class="t" style="left:968.5px;top:606.5px;width:88px;text-align:center;font-size:12px;font-weight:bold;color:#d8d8d8;">SSCTrack</div>
<div class="a" style="left:1056.8px;top:600px;width:1px;height:28px;background:#2a2a2a;"></div>
<svg class="a" style="left:1374px;top:601px" width="26" height="26" viewBox="0 0 26 26">
<circle cx="12.9" cy="12.5" r="11.3" fill="#fff"/>
<path d="M8 7.5 L17.8 17.5 M17.8 7.5 L8 17.5" stroke="#000" stroke-width="2.6" stroke-linecap="round"/></svg>
<div class="t" style="left:1405px;top:609px;font-size:9px;font-weight:bold;color:#d8d8d8;">CLOSE</div>
<div class="a" style="left:4px;top:629.8px;width:1434px;height:162.5px;background:#202020;"></div>
<div class="a" style="left:900.5px;top:629.8px;width:2px;height:162.5px;background:#1a6ab8;"></div>
<div class="t" style="left:25.2px;top:634.9px;width:100px;text-align:center;font-size:11.8px;font-style:italic;color:#b0b0b0;">Trace On</div>
<div class="a" style="left:66px;top:650.4px;width:16.3px;height:16.3px;background:#f4f4f4;border:1px solid #aaa;box-sizing:border-box;"></div>
<svg class="a" style="left:66px;top:650px" width="17" height="17"><path d="M3.5 8.5 L7 12 L13.5 4.5" fill="none" stroke="#1a6ad8" stroke-width="2.6"/></svg>
<svg class="a" style="left:0;top:660px" width="200" height="12"><path d="M13.5 3 V7.5 H18.5" fill="none" stroke="#888" stroke-width="1"/><path d="M135.5 2 V7.5 H130.5" fill="none" stroke="#888" stroke-width="1"/></svg>
<div class="t" style="left:1.8px;top:677.7px;width:100px;text-align:center;font-size:11.8px;font-style:italic;color:#b0b0b0;">single</div>
<div class="t" style="left:86.2px;top:677.7px;width:100px;text-align:center;font-size:11.8px;font-style:italic;color:#b0b0b0;">dual</div>
<div class="a" style="left:18.3px;top:689px;width:69.7px;height:33.2px;background:#234a6c;border:1.5px solid #3a7ad8;box-sizing:border-box;"></div>
<div class="t" style="left:18.3px;top:695.5px;width:69.7px;text-align:center;font-size:19.5px;font-weight:bold;color:#f0f0f0;">f(x)</div>
<div class="a" style="left:102.6px;top:689px;width:69.8px;height:33.2px;background:#4a4a4a;border:1px solid #585858;box-sizing:border-box;"></div>
<div class="t" style="left:102.6px;top:695.5px;width:69.8px;text-align:center;font-size:19.5px;font-weight:bold;color:#f0f0f0;">g(f(x))</div>
<div class="t" style="left:1.8px;top:731.1px;width:100px;text-align:center;font-size:11.8px;font-style:italic;color:#b0b0b0;">graph</div>
<div class="t" style="left:86.2px;top:731.1px;width:100px;text-align:center;font-size:11.8px;font-style:italic;color:#b0b0b0;">web edit</div>
<div class="a" style="left:18.3px;top:742.9px;width:69.7px;height:32.9px;background:#4a4a4a;border:1px solid #585858;box-sizing:border-box;"></div>
<div class="a" style="left:102.6px;top:742.9px;width:69.8px;height:32.9px;background:#4a4a4a;border:1px solid #585858;box-sizing:border-box;"></div>
<svg class="a" style="left:0;top:740px" width="200" height="40" viewBox="0 740 200 40">
<g fill="#1a8ef0">
<rect x="42" y="756.5" width="3" height="4.5"/><rect x="45.5" y="752.5" width="3.2" height="8.5"/><rect x="49.2" y="748.5" width="3.2" height="12.5"/>
<rect x="52.9" y="746.5" width="3.4" height="14.5"/><rect x="56.8" y="749.5" width="3.2" height="11.5"/><rect x="60.5" y="753" width="3" height="8"/><rect x="64" y="757" width="2.5" height="4"/>
<rect x="41" y="759.5" width="26" height="1.8"/></g>
<path d="M42 769 Q44 764 47 764 L50 764 Q51 769 54 770 L58 770 Q59 765 62 764.5 L66 764.5" fill="none" stroke="#12b8c8" stroke-width="1.6"/>
<path d="M42 768 L47 768 Q50 766 53 768 L58 768 Q61 766 66 768" fill="none" stroke="#d8b400" stroke-width="1.3"/>
</svg>
<svg class="a" style="left:0;top:740px" width="200" height="40" viewBox="0 740 200 40">
<g fill="#28f4f4" stroke="#10c8d0" stroke-width="0.8">
<rect x="125.3" y="750.8" width="6.2" height="6.8"/><rect x="134.6" y="750.8" width="6.2" height="6.8"/>
<rect x="125.3" y="761.9" width="6.2" height="6.8"/><rect x="134.6" y="761.9" width="6.2" height="6.8"/>
<rect x="145.2" y="754.1" width="5.2" height="11.8"/></g>
<path d="M131.5 754.2 H134.6 M131.5 765.3 H134.6 M140.8 754.2 Q142.5 754.2 145.2 758 M140.8 765.3 Q142.5 765.3 145.2 762" fill="none" stroke="#10d8e0" stroke-width="1"/>
</svg>
<div class="a" style="left:190.5px;top:640px;width:1.5px;height:136px;background:#2e2e2e;"></div>
<div class="t" style="left:218.0px;top:646.1px;width:100px;text-align:center;font-size:11.8px;font-style:italic;color:#b0b0b0;">Source1</div>
<div class="t" style="left:220px;top:662px;font-size:12px;color:#e0e0e0;">F2</div>
<div class="a" style="left:212.8px;top:676.5px;width:112px;height:1.5px;background:#777;"></div>
<div class="a" style="left:212.8px;top:670px;width:1px;height:7px;background:#777;"></div>
<svg class="a" style="left:318px;top:669px" width="8" height="8"><path d="M7 0 L7 7 L0 7 Z" fill="#8a8a8a"/></svg>
<div class="a" style="left:325px;top:664px;width:36px;height:1.2px;background:#555;"></div>
<div class="a" style="left:361px;top:643.7px;width:32px;height:32.5px;background:#4a4a4a;border:1.5px solid #5c5c5c;box-sizing:border-box;"></div>
<svg class="a" style="left:355px;top:640px" width="45" height="40" viewBox="355 640 45 40"><defs><linearGradient id="ng" x1="0" y1="0" x2="1" y2="1"><stop offset="0" stop-color="#3af0b0"/><stop offset="1" stop-color="#12e8f0"/></linearGradient></defs><path d="M364.6 659.6 L376.7 648.2 L377.7 669.2 L389.3 659.6" fill="none" stroke="url(#ng)" stroke-width="2.5" stroke-linejoin="round" stroke-linecap="round"/></svg>
<div class="t" style="left:438.7px;top:646.7px;width:100px;text-align:center;font-size:11.8px;font-style:italic;color:#b0b0b0;">Operator1</div>
<div class="t" style="left:401.6px;top:661px;font-size:12px;color:#e0e0e0;">SSCTrack</div>
<div class="a" style="left:393px;top:675px;width:192.7px;height:1.5px;background:#777;"></div>
<div class="a" style="left:393px;top:668px;width:1px;height:7px;background:#777;"></div>
<svg class="a" style="left:579px;top:667px" width="8" height="8"><path d="M7 0 L7 7 L0 7 Z" fill="#8a8a8a"/></svg>
<div class="a" style="left:618.7px;top:691.7px;width:258px;height:36.7px;border:1px solid #555;box-sizing:border-box;"></div>
<div class="a" style="left:622px;top:686px;width:56px;height:10px;background:#202020;"></div>
<div class="t" style="left:624px;top:685.5px;font-size:12px;font-weight:bold;color:#4a9ad8;">Summary</div>
<div class="t" style="left:647px;top:706px;width:200px;text-align:center;font-size:12px;color:#e0e0e0;">SSCTrack(F2)</div>
<div class="t" style="left:213.3px;top:731.5px;font-size:12px;color:#dcdcdc;">Actions for trace F3</div>
<div class="a" style="left:212px;top:752.3px;width:104.5px;height:32.3px;background:#4c4c4c;border:1px solid #5a5a5a;border-top:2px solid #5e5e5e;box-sizing:border-box;"></div>
<div class="t" style="left:212px;top:772px;width:104.5px;text-align:center;font-size:12px;color:#e8e8e8;">Measure</div>
<div class="a" style="left:330px;top:752.3px;width:105.4px;height:32.3px;background:#4c4c4c;border:1px solid #5a5a5a;border-top:2px solid #5e5e5e;box-sizing:border-box;"></div>
<div class="t" style="left:330px;top:772px;width:105.4px;text-align:center;font-size:12px;color:#e8e8e8;">Store</div>
<div class="a" style="left:451.6px;top:752.3px;width:103.3px;height:32.3px;background:#4c4c4c;border:1px solid #5a5a5a;border-top:2px solid #5e5e5e;box-sizing:border-box;"></div>
<div class="t" style="left:451.6px;top:772px;width:103.3px;text-align:center;font-size:12px;color:#e8e8e8;">Label</div>
<div class="a" style="left:572.5px;top:752.3px;width:104.7px;height:32.3px;background:#4c4c4c;border:1px solid #5a5a5a;border-top:2px solid #5e5e5e;box-sizing:border-box;"></div>
<div class="t" style="left:572.5px;top:756.5px;width:104.7px;text-align:center;font-size:12px;color:#e8e8e8;">Add / Edit</div>
<div class="t" style="left:572.5px;top:770px;width:104.7px;text-align:center;font-size:12px;color:#e8e8e8;">Name</div>
<svg class="a" style="left:0;top:740px" width="300" height="40" viewBox="0 740 300 40">
<circle cx="248.8" cy="760.4" r="1.5" fill="#8a8a8a"/>
<path d="M249 760.4 H277.5" stroke="#000" stroke-width="1.7"/>
<path d="M258 755.8 V770 M273.5 755.8 V770" stroke="#080808" stroke-width="1.9"/>
<path d="M261 767.4 H270.5" stroke="#d0b030" stroke-width="2.6" stroke-linecap="round"/>
<path d="M260.3 765.8 V769 M271.2 765.8 V769" stroke="#5aa040" stroke-width="1.1"/>
<ellipse cx="258" cy="771" rx="1.6" ry="0.8" fill="#aaa"/><ellipse cx="273.5" cy="771" rx="1.6" ry="0.8" fill="#aaa"/>
</svg>
<svg class="a" style="left:0;top:740px" width="450" height="40" viewBox="0 740 450 40">
<rect x="375" y="761" width="16.3" height="10.2" rx="1" fill="#5c5c5c"/>
<rect x="375.5" y="767" width="15.3" height="1.8" fill="#a8a8a8"/>
<path d="M379.8 755.7 H385.7 V759.2 H388.5 L382.75 764.8 L377 759.2 H379.8 Z" fill="#fcc800"/>
</svg>
<svg class="a" style="left:487px;top:755px" width="32" height="16" viewBox="0 0 32 16">
<path d="M2 8 L8 2 H28 V14 H8 Z" fill="#f4f060" stroke="#222" stroke-width="1"/>
<circle cx="8" cy="8" r="1.3" fill="#222"/></svg>
<div class="t" style="left:727.0px;top:753.4px;width:160px;text-align:center;font-size:11.8px;font-style:italic;color:#4e4e4e;">Help Markers</div>
<div class="t" style="left:745.8px;top:771.5px;font-size:12px;color:#4e4e4e;">Simple</div>
<div class="a" style="left:738.4px;top:785px;width:138px;height:1px;background:#4a4a4a;"></div>
<div class="a" style="left:738.4px;top:779px;width:1px;height:6px;background:#4a4a4a;"></div>
<div class="t" style="left:1016.5px;top:633px;width:300px;text-align:center;font-size:12px;color:#e0e0e0;">Create SSC Profile</div>
<div class="t" style="left:1016.5px;top:647px;width:300px;text-align:center;font-size:12px;color:#e0e0e0;">Freq vs time of Spread Spectrum Clock</div>
<div class="t" style="left:918.5px;top:665.4px;width:220px;text-align:center;font-size:11.8px;font-style:italic;color:#c0c0c0;">Mean Frequency</div>
<div class="a" style="left:924px;top:663.7px;width:209px;height:32.5px;border:2px solid #1a7ae0;box-sizing:border-box;border-radius:1px;"></div>
<svg class="a" style="left:1124px;top:687.1px" width="9" height="9"><path d="M8 0 L8 8 L0 8 Z" fill="#1a7ae0"/></svg>
<div class="t" style="left:931.6px;top:681.0px;font-size:12px;color:#e0e0e0;">15.961600000 GHz</div>
<div class="t" style="left:918.5px;top:705.1px;width:220px;text-align:center;font-size:11.8px;font-style:italic;color:#c0c0c0;">Bandwidth</div>
<div class="a" style="left:924px;top:735.8px;width:209px;height:1.3px;background:#6e6e6e;"></div>
<div class="a" style="left:924px;top:728.8px;width:1px;height:7px;background:#777;"></div>
<svg class="a" style="left:1126px;top:726.8px" width="8" height="8"><path d="M7 0 L7 7 L0 7 Z" fill="#8a8a8a"/></svg>
<div class="t" style="left:931.6px;top:720.6999999999999px;font-size:12px;color:#e0e0e0;">2.000 MHz</div>
<div class="t" style="left:918.5px;top:743.7px;width:220px;text-align:center;font-size:11.8px;font-style:italic;color:#c0c0c0;">Decimate by</div>
<div class="a" style="left:924px;top:774.4px;width:209px;height:1.3px;background:#6e6e6e;"></div>
<div class="a" style="left:924px;top:767.4px;width:1px;height:7px;background:#777;"></div>
<svg class="a" style="left:1126px;top:765.4px" width="8" height="8"><path d="M7 0 L7 7 L0 7 Z" fill="#8a8a8a"/></svg>
<div class="t" style="left:931.6px;top:759.3px;font-size:12px;color:#e0e0e0;">750</div>
<div class="t" style="left:1195.1px;top:665.4px;width:220px;text-align:center;font-size:11.8px;font-style:italic;color:#c0c0c0;">LPF Passband width</div>
<div class="a" style="left:1200.6px;top:696.1px;width:209.0px;height:1.3px;background:#6e6e6e;"></div>
<div class="a" style="left:1200.6px;top:689.1px;width:1px;height:7px;background:#777;"></div>
<svg class="a" style="left:1402.6px;top:687.1px" width="8" height="8"><path d="M7 0 L7 7 L0 7 Z" fill="#8a8a8a"/></svg>
<div class="t" style="left:1208.1999999999998px;top:681.0px;font-size:12px;color:#e0e0e0;">2.000000 MHz</div>
<div class="t" style="left:1195.1px;top:705.1px;width:220px;text-align:center;font-size:11.8px;font-style:italic;color:#c0c0c0;">LPF Transition width</div>
<div class="a" style="left:1200.6px;top:735.8px;width:209.0px;height:1.3px;background:#6e6e6e;"></div>
<div class="a" style="left:1200.6px;top:728.8px;width:1px;height:7px;background:#777;"></div>
<svg class="a" style="left:1402.6px;top:726.8px" width="8" height="8"><path d="M7 0 L7 7 L0 7 Z" fill="#8a8a8a"/></svg>
<div class="t" style="left:1208.1999999999998px;top:720.6999999999999px;font-size:12px;color:#e0e0e0;">2.000000 MHz</div>
<div class="t" style="left:1195.1px;top:743.7px;width:220px;text-align:center;font-size:11.8px;font-style:italic;color:#c0c0c0;">Scale</div>
<div class="a" style="left:1200.6px;top:774.4px;width:209.0px;height:1.3px;background:#6e6e6e;"></div>
<div class="a" style="left:1200.6px;top:767.4px;width:1px;height:7px;background:#777;"></div>
<svg class="a" style="left:1402.6px;top:765.4px" width="8" height="8"><path d="M7 0 L7 7 L0 7 Z" fill="#8a8a8a"/></svg>
<div class="t" style="left:1208.1999999999998px;top:759.3px;font-size:12px;color:#e0e0e0;">20.0 MHz/div</div>
<div class="a" style="left:4px;top:792.3px;width:1434px;height:1.3px;background:#3a3a3a;"></div>
<div class="a" style="left:4px;top:793.6px;width:1434px;height:15px;background:#1e1e1e;"></div>
<div class="t" style="left:10px;top:795.6px;font-size:12.5px;font-weight:bold;letter-spacing:-0.45px;color:#e8e8e8;">TELEDYNE</div>
<div class="t" style="left:77.6px;top:795.6px;font-size:12.5px;color:#e0e0e0;letter-spacing:-1.15px;">LECROY</div>
<div class="a" style="left:124px;top:797px;width:1.5px;height:10px;background:#666;"></div>
<div class="t" style="left:130px;top:795.6px;font-size:12.5px;font-weight:bold;color:#3ab83a;">HD</div>
<div class="t" style="left:153.4px;top:795.6px;font-size:12.8px;color:#e0e0e0;">12 bits</div>
<div class="a" style="left:646px;top:799.5px;width:150px;height:4px;background:#c8c8c8;border-radius:2px;"></div>
<div class="t" style="right:15px;top:796px;font-size:12px;color:#e0e0e0;">12/3/2024 3:38:30 PM</div>
</body></html>
